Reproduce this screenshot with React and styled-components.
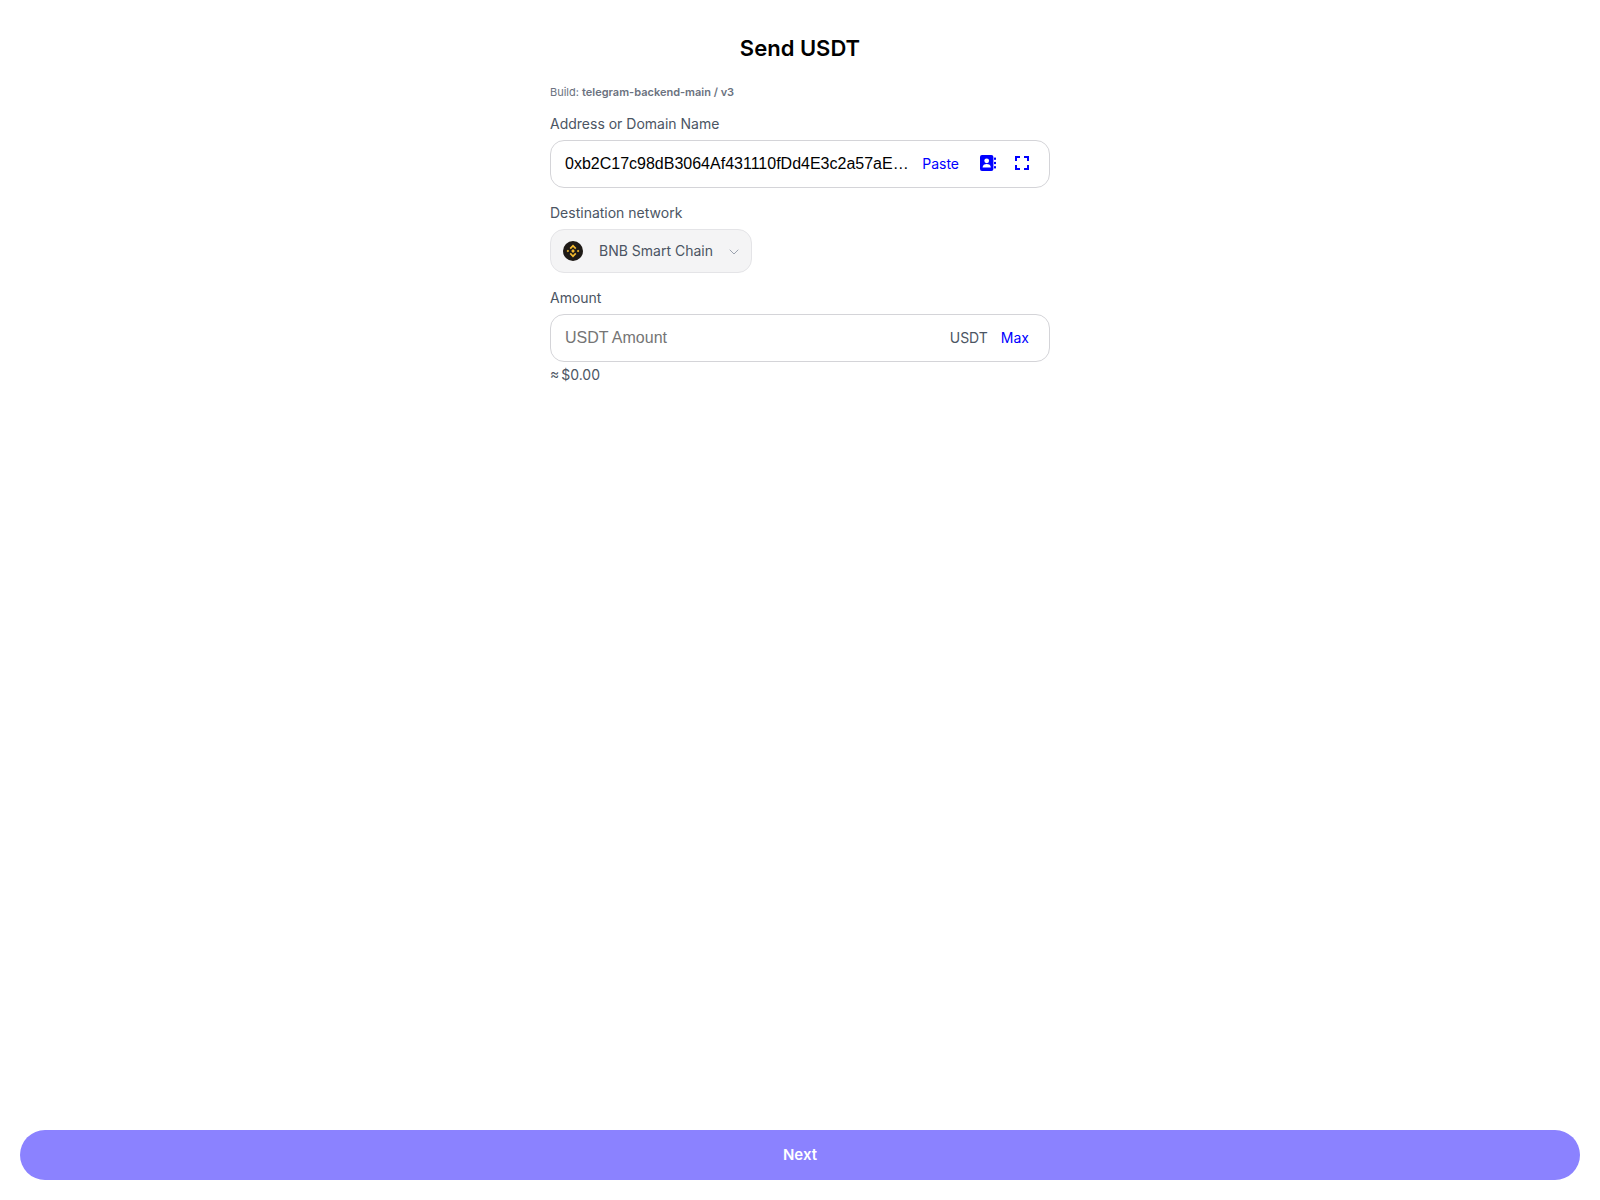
import React from "react";
import styled, { createGlobalStyle } from "styled-components";
import { ChevronDown } from "lucide-react";

const GlobalStyle = createGlobalStyle`
  * { box-sizing: border-box; }
  body {
    margin: 0;
    background: #fff;
    font-family: Inter, "Liberation Sans", sans-serif;
  }
`;

const ContactIcon = () => (
  <svg width="16" height="16" viewBox="0 0 16 16">
    <rect x="0" y="0" width="13.4" height="16" rx="2" fill="#0000ff" />
    <circle cx="6.7" cy="5.8" r="2.4" fill="#fff" />
    <path d="M2.6 12.4c0-2.3 1.8-3.4 4.1-3.4s4.1 1.1 4.1 3.4z" fill="#fff" />
    <rect x="14" y="2.6" width="2" height="2.2" fill="#0000ff" />
    <rect x="14" y="6.9" width="2" height="2.2" fill="#0000ff" />
    <rect x="14" y="11.2" width="2" height="2.2" fill="#0000ff" />
  </svg>
);

const ScanIcon = () => (
  <svg width="14" height="14" viewBox="0 0 14 14" fill="none" stroke="#0000ff" strokeWidth="2">
    <path d="M1 5V1h4M9 1h4v4M13 9v4H9M5 13H1V9" />
  </svg>
);

const BnbIcon = () => (
  <svg width="20" height="20" viewBox="0 0 20 20">
    <circle cx="10" cy="10" r="10" fill="#1e1a16" />
    <g fill="#f3ba2f">
      <path d="M10 3.6l3.4 3.4-1.2 1.2L10 6 7.8 8.2 6.6 7z" />
      <path d="M10 16.4l-3.4-3.4 1.2-1.2L10 14l2.2-2.2 1.2 1.2z" />
      <path d="M3.6 10l1.3-1.3L6.2 10l-1.3 1.3z" />
      <path d="M13.8 10l1.3-1.3 1.3 1.3-1.3 1.3z" />
      <path d="M10 8.1l1.9 1.9-1.9 1.9L8.1 10z" />
    </g>
  </svg>
);

const App = () => {
  return (
    <Page>
      <GlobalStyle />
      <Title>Send USDT</Title>
      <Form>
        <Build>
          Build: <b>telegram-backend-main / v3</b>
        </Build>
        <Label>Address or Domain Name</Label>
        <Field>
          <TextInput readOnly defaultValue="0xb2C17c98dB3064Af431110fDd4E3c2a57aE8f6D4" />
          <Actions>
            <LinkText>Paste</LinkText>
            <IconSlot>
              <ContactIcon />
            </IconSlot>
            <IconSlot>
              <ScanIcon />
            </IconSlot>
          </Actions>
        </Field>
        <Label $top={16}>Destination network</Label>
        <NetworkSelect>
          <BnbIcon />
          <NetworkName>BNB Smart Chain</NetworkName>
          <Chevron size={16} color="#9ca3af" strokeWidth={1.5} />
        </NetworkSelect>
        <Label $top={16}>Amount</Label>
        <Field>
          <TextInput placeholder="USDT Amount" />
          <AmountActions>
            <Unit>USDT</Unit>
            <LinkText>Max</LinkText>
          </AmountActions>
        </Field>
        <Fiat>≈ $0.00</Fiat>
      </Form>
      <NextButton>Next</NextButton>
    </Page>
  );
};

const Page = styled.main`
  display: flex;
  flex-direction: column;
  align-items: center;
  height: 1200px;
  padding: 34px 20px 20px;
`;
const Title = styled.h1`
  margin: 0;
  font-size: 22px;
  line-height: 28px;
  font-weight: 600;
  color: #000;
`;
const Form = styled.section`
  width: 500px;
  margin-top: 22px;
  display: flex;
  flex-direction: column;
`;
const Build = styled.div`
  font-size: 11px;
  line-height: 16px;
  color: #6b7280;

  b {
    font-weight: 600;
  }
`;
const Label = styled.label`
  margin-top: ${(p) => p.$top || 15}px;
  margin-bottom: 7px;
  font-size: 14px;
  line-height: 18px;
  color: #4b5563;
`;
const Field = styled.div`
  height: 48px;
  display: flex;
  align-items: center;
  padding: 0 20px 0 14px;
  border: 1px solid #d4d4d8;
  border-radius: 14px;
  background: #fff;
`;
const TextInput = styled.input`
  flex: 1;
  min-width: 0;
  padding: 0;
  border: 0;
  outline: 0;
  background: transparent;
  font-family: "Liberation Sans", Arial, sans-serif;
  font-size: 16px;
  color: #000;
  text-overflow: ellipsis;

  &::placeholder {
    color: #757575;
    opacity: 1;
  }
`;
const Actions = styled.div`
  display: flex;
  align-items: center;
  margin-left: 9px;
  padding-bottom: 2px;
  gap: 19px;

  ${() => LinkText} {
    margin-right: 2px;
  }
`;
const AmountActions = styled.div`
  display: flex;
  align-items: center;
  gap: 13px;
  padding-bottom: 2px;
`;
const LinkText = styled.span`
  font-size: 14px;
  color: #0000ff;
`;
const Unit = styled.span`
  font-size: 14px;
  color: #4b5563;
`;
const IconSlot = styled.span`
  display: flex;
  align-items: center;
`;
const NetworkSelect = styled.div`
  width: 202px;
  height: 44px;
  display: flex;
  align-items: center;
  padding: 0 9px 0 12px;
  border: 1px solid #e4e4e7;
  border-radius: 14px;
  background: #f4f4f5;
`;
const NetworkName = styled.span`
  flex: 1;
  margin-left: 16px;
  padding-bottom: 2px;
  font-size: 14px;
  color: #4b5563;
`;
const Chevron = styled(ChevronDown)`
  margin-top: 2px;
`;
const Fiat = styled.div`
  margin-top: 4px;
  font-size: 14px;
  line-height: 18px;
  word-spacing: -2px;
  color: #4b5563;
`;
const NextButton = styled.button`
  margin-top: auto;
  width: 100%;
  height: 50px;
  padding: 0 0 2px;
  border: 0;
  border-radius: 25px;
  background: #8b82ff;
  color: #fff;
  font-family: inherit;
  font-size: 15px;
  font-weight: 600;
`;

export default App;
